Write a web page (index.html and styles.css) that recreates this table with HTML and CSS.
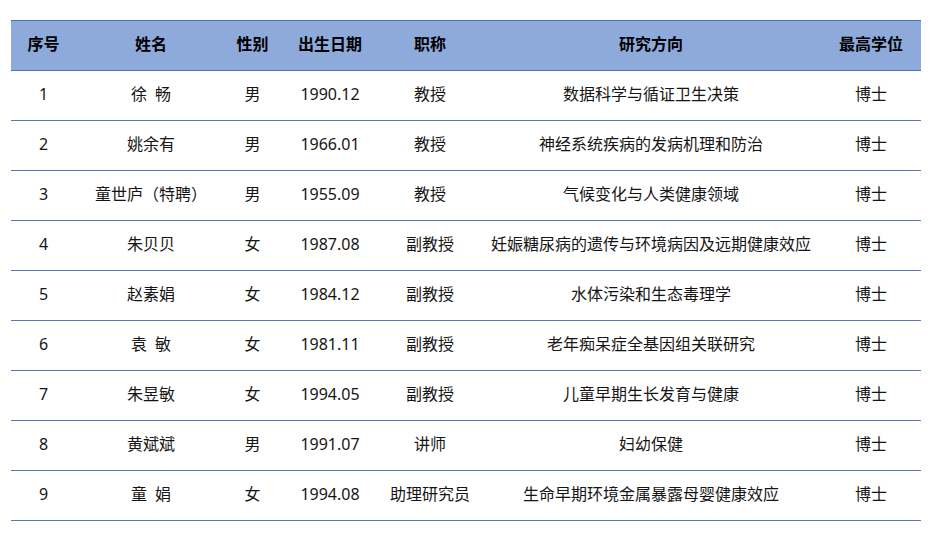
FILE: index.html
```html
<!DOCTYPE html>
<html lang="zh-CN">
<head>
<meta charset="utf-8">
<title>教师名单</title>
<link rel="stylesheet" href="styles.css">
</head>
<body>
<table class="staff">
  <colgroup>
    <col class="c1"><col class="c2"><col class="c3"><col class="c4"><col class="c5"><col class="c6"><col class="c7">
  </colgroup>
  <thead>
    <tr><th>序号</th><th>姓名</th><th>性别</th><th>出生日期</th><th>职称</th><th>研究方向</th><th class="last">最高学位</th></tr>
  </thead>
  <tbody>
    <tr><td>1</td><td>徐&ensp;畅</td><td>男</td><td>1990.12</td><td>教授</td><td>数据科学与循证卫生决策</td><td class="last">博士</td></tr>
    <tr><td>2</td><td>姚余有</td><td>男</td><td>1966.01</td><td>教授</td><td>神经系统疾病的发病机理和防治</td><td class="last">博士</td></tr>
    <tr><td>3</td><td>童世庐（特聘）</td><td>男</td><td>1955.09</td><td>教授</td><td>气候变化与人类健康领域</td><td class="last">博士</td></tr>
    <tr><td>4</td><td>朱贝贝</td><td>女</td><td>1987.08</td><td>副教授</td><td>妊娠糖尿病的遗传与环境病因及远期健康效应</td><td class="last">博士</td></tr>
    <tr><td>5</td><td>赵素娟</td><td>女</td><td>1984.12</td><td>副教授</td><td>水体污染和生态毒理学</td><td class="last">博士</td></tr>
    <tr><td>6</td><td>袁&ensp;敏</td><td>女</td><td>1981.11</td><td>副教授</td><td>老年痴呆症全基因组关联研究</td><td class="last">博士</td></tr>
    <tr><td>7</td><td>朱昱敏</td><td>女</td><td>1994.05</td><td>副教授</td><td>儿童早期生长发育与健康</td><td class="last">博士</td></tr>
    <tr><td>8</td><td>黄斌斌</td><td>男</td><td>1991.07</td><td>讲师</td><td>妇幼保健</td><td class="last">博士</td></tr>
    <tr><td>9</td><td>童&ensp;娟</td><td>女</td><td>1994.08</td><td>助理研究员</td><td>生命早期环境金属暴露母婴健康效应</td><td class="last">博士</td></tr>
  </tbody>
</table>
</body>
</html>
```

FILE: styles.css
```css
html, body {
  margin: 0;
  padding: 0;
  background: #ffffff;
}

body {
  padding: 20px 0 0 11px;
  font-family: "Noto Sans", "Noto Sans CJK SC", sans-serif;
  font-size: 16px;
  color: #151515;
}

.staff {
  width: 910px;
  table-layout: fixed;
  border-collapse: collapse;
  border-spacing: 0;
}

.c1 { width: 65px; }
.c2 { width: 150px; }
.c3 { width: 53px; }
.c4 { width: 102px; }
.c5 { width: 98px; }
.c6 { width: 344px; }
.c7 { width: 98px; }

.staff th,
.staff td {
  padding: 0 0 3px 0;
  text-align: center;
  vertical-align: middle;
  line-height: 20px;
  white-space: nowrap;
}

.staff th.last,
.staff td.last {
  padding-right: 2px;
}

.staff thead tr {
  background: #8eaadb;
}

.staff th {
  height: 46px;
  font-weight: bold;
  color: #000000;
  border-top: 1px solid #4f71b3;
  border-bottom: 1px solid #4f71b3;
}

.staff td {
  height: 46px;
  border-bottom: 1px solid #5a78b4;
}
```
